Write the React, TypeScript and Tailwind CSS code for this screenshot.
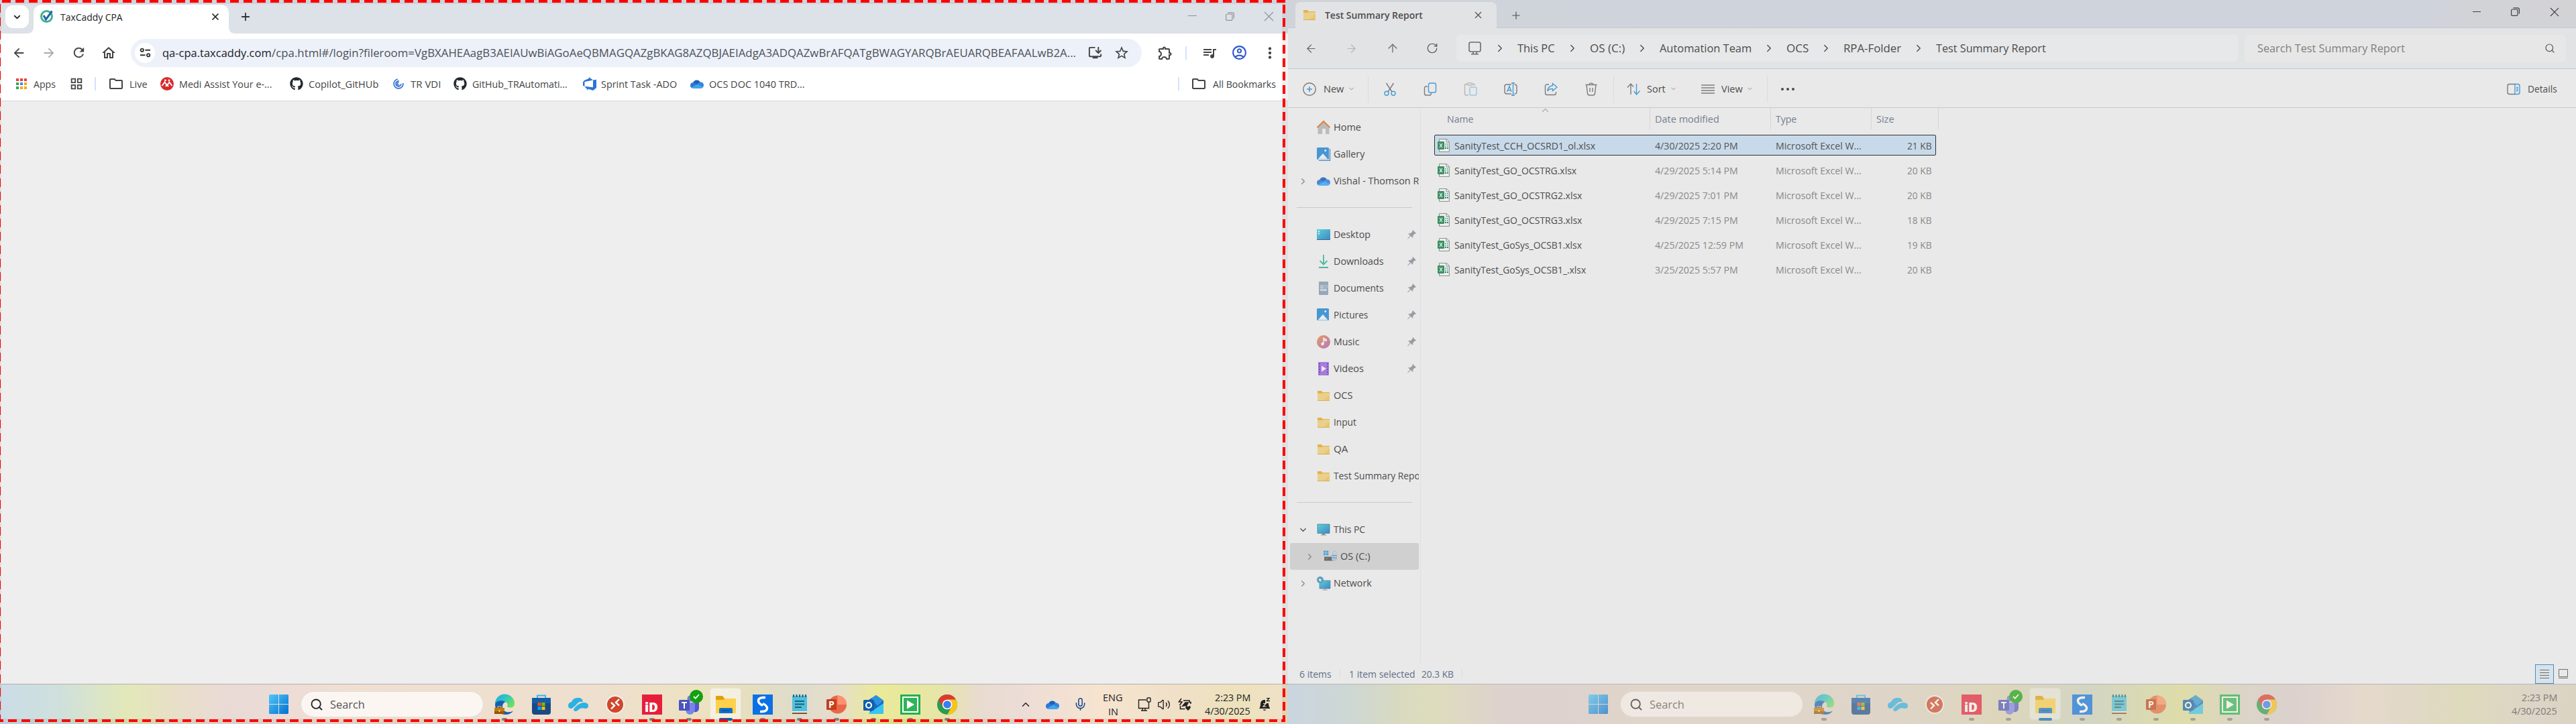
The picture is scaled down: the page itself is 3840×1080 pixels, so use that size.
import React, { useLayoutEffect, useRef, useState } from "react";
import {
  ArrowLeft, ArrowRight, ArrowUp, RotateCw, ChevronDown, ChevronRight, ChevronUp,
  X, Plus, Search, Mic, Volume2,
} from "lucide-react";
import {
  MdInstallDesktop, MdStarBorder, MdOutlineExtension, MdQueueMusic, MdMoreVert,
  MdOutlineAccountCircle, MdOutlineFolder, MdOutlineGridView, MdOutlineHome, MdRefresh,
  MdArrowBack, MdArrowForward,
} from "react-icons/md";
import { FaGithub } from "react-icons/fa";

/* Single line of text fitted to a given advance width. */
function T({ w, className = "", children }: { w: number; className?: string; children: string }) {
  const ref = useRef<HTMLSpanElement>(null);
  const [scale, setScale] = useState(1);
  useLayoutEffect(() => {
    if (ref.current) setScale(w / ref.current.offsetWidth);
  }, [w]);
  return (
    <span className={"block shrink-0 whitespace-nowrap " + className} style={{ width: w }}>
      <span ref={ref} className="inline-block origin-left" style={{ transform: `scaleX(${scale})` }}>
        {children}
      </span>
    </span>
  );
}

const sv = "block shrink-0 overflow-visible";

/* ---------- icons ---------- */
function Folder({ className = "" }: { className?: string }) {
  return (
    <svg viewBox="0 0 18 15" className={sv + " w-[18px] h-[15px] " + className}>
      <path d="M0 0.8Q0 0 .8 0H6l1.5 2H18v12.5H0z" fill="#e3b349" />
      <path d="M0 4h6.5L8 3h10v11H0z" fill="#ead08c" />
      <path d="M9 14L18 6v8z" fill="#e8c76f" />
      <path d="M0 14h18v.8H0z" fill="#d5a443" />
    </svg>
  );
}
function CloudIcon({ className = "" }: { className?: string }) {
  return (
    <svg viewBox="0 0 20 14" className={sv + " " + className}>
      <path d="M4 6A5.8 5.8 0 0 1 14.8 4.6L9 9z" fill="#1f5fb8" />
      <path d="M0 9.5A4.4 4.4 0 0 1 5 5l7 4-9 4.5Q0 12.5 0 9.5z" fill="#2b78d4" />
      <path d="M10 8l4.5-3.4A4.5 4.5 0 0 1 20 9.3Q20 11 19 12z" fill="#2f84dc" />
      <path d="M1.5 12.6L11 7.5l8.3 4.6Q18 14 15.5 14H4.5Q2.6 14 1.5 12.6z" fill="#41a5ee" />
    </svg>
  );
}
function TaxCaddy() {
  return (
    <svg viewBox="0 0 20 20" className={sv + " w-5 h-5"}>
      <circle cx="9.5" cy="10.5" r="8" fill="#fff" stroke="#3fb58c" strokeWidth="3" />
      <path d="M5 9l3.5 6L17.5 2.5" fill="none" stroke="#2c62a8" strokeWidth="3" />
    </svg>
  );
}
function AppsGrid() {
  const c = ["#ea4335", "#ea4335", "#ea4335", "#34a853", "#4285f4", "#f4a823", "#34a853", "#f4a823", "#f4a823"];
  return (
    <div className="grid grid-cols-3 gap-[2px] w-4 h-4 shrink-0">
      {c.map((x, i) => <i key={i} className="block" style={{ background: x }} />)}
    </div>
  );
}
function Medi() {
  return (
    <svg viewBox="0 0 20 20" className={sv + " w-5 h-5"}>
      <circle cx="10" cy="10" r="10" fill="#d62b2e" />
      <circle cx="7.5" cy="5" r="1.4" fill="#fff" /><circle cx="13" cy="5" r="1.4" fill="#fff" />
      <path d="M2.5 13L6.5 7.5l3.5 5 3.5-5 4 5.5M8 14l2-3 2 3" fill="none" stroke="#fff" strokeWidth="1.8" />
    </svg>
  );
}
function Swirl() {
  return (
    <svg viewBox="0 0 16 16" className={sv + " w-4 h-4"}>
      <path d="M7 1A7 7 0 1 0 15 7M9 4A4 4 0 1 0 12 8M8.5 6.5A1.7 1.7 0 1 0 9 9" fill="none" stroke="#3b74d1" strokeWidth="1.7" />
    </svg>
  );
}
function Ado() {
  return (
    <svg viewBox="0 0 24 24" className={sv + " w-5 h-5"} fill="#2b74d8">
      <path d="M0 8.877L2.247 5.91l8.405-3.416V.022l7.37 5.393L2.966 8.338v8.225L0 15.707zm24-4.45v14.651l-5.753 4.9-9.303-3.057v3.056l-5.978-7.416 15.057 1.798V5.415z" />
    </svg>
  );
}
function Tune() {
  return (
    <svg viewBox="0 0 18 16" className={sv + " w-[17px] h-[15px]"} fill="none" stroke="#333" strokeWidth="2">
      <circle cx="4" cy="4" r="2.3" /><path d="M9 4h8M1 12h8" /><circle cx="14" cy="12" r="2.3" />
    </svg>
  );
}
function Restore({ className = "" }: { className?: string }) {
  return (
    <svg viewBox="0 0 13 13" className={sv + " w-[13px] h-[13px] " + className} fill="none" stroke="currentColor" strokeWidth="1.2">
      <rect x=".6" y="3" width="9.4" height="9.4" rx="1.5" />
      <path d="M3.5 .8h6.5q2.4 0 2.4 2.4v6.3" />
    </svg>
  );
}
function WinLogo() {
  return (
    <svg viewBox="0 0 29 29" className={sv + " w-[29px] h-[29px]"}>
      <defs>
        <linearGradient id="win" x1="0" y1="0" x2="1" y2="1">
          <stop offset="0" stopColor="#4fc8fa" /><stop offset="1" stopColor="#0070d0" />
        </linearGradient>
      </defs>
      <path d="M1 0h13v14H0V1zM15 0h13l1 1v13H15zM0 15h14v14H1l-1-1zM15 15h14v13l-1 1H15z" fill="url(#win)" />
    </svg>
  );
}
function Monitor({ globe = false }: { globe?: boolean }) {
  return (
    <svg viewBox="0 0 20 20" className={sv + " w-5 h-5"}>
      <defs>
        <linearGradient id="mon" x1="0" y1="0" x2="1" y2="1">
          <stop offset="0" stopColor="#5fd0d6" /><stop offset="1" stopColor="#3f87c6" />
        </linearGradient>
      </defs>
      {globe ? (
        <>
          <path d="M4 6h16v12H4z" fill="url(#mon)" stroke="#3b7c9c" strokeWidth=".6" />
          <path d="M11 18h2v1.5H8.500v1h7v-1H13" fill="#999" />
          <circle cx="5" cy="5" r="5" fill="#5b9dbd" /><path d="M3 3l4 1-1 4-3-2z" fill="#d5e4ea" />
        </>
      ) : (
        <>
          <path d="M1 2h18v13.500H1z" fill="url(#mon)" stroke="#3a7f96" strokeWidth=".8" />
          <path d="M8 16h4v1.500h2v1H6v-1h2z" fill="#8b8f92" />
        </>
      )}
    </svg>
  );
}
function SideIcon({ name }: { name: string }) {
  const c = sv + " w-5 h-5";
  switch (name) {
    case "home":
      return (
        <svg viewBox="0 0 20 20" className={c}>
          <path d="M1.500 9L10 1.500 18.500 9v11H13v-8H8v8H1.500z" fill="#bcbcbc" />
          <path d="M.5 10.300L10 1l9.500 9.300" fill="none" stroke="#dc8442" strokeWidth="2" />
        </svg>
      );
    case "gallery":
    case "pictures":
      return (
        <svg viewBox="0 0 20 20" className={c}>
          {name === "gallery" && <path d="M19.500 2v17.500H3" fill="none" stroke="#3d82bb" strokeWidth="1.200" />}
          <rect x="0" y="0" width="18" height="18" rx="1.500" fill="#4797d2" />
          <path d="M1.500 17.500L9 9l7.500 8.500z" fill="#e6ebf0" /><circle cx="12.800" cy="4.500" r="1.500" fill="#e6f0f6" />
        </svg>
      );
    case "cloud":
      return <CloudIcon className="w-5 h-[14px] opacity-85" />;
    case "desktop":
      return (
        <svg viewBox="0 0 20 20" className={c}>
          <path d="M0 2h20v16H0z" fill="url(#mon)" /><path d="M0 17h20v1H0z" fill="#2f6d9a" />
          <path d="M2 4h2v2H2zM2 7.500h2v2H2z" fill="#d8f2f4" />
        </svg>
      );
    case "downloads":
      return (
        <svg viewBox="0 0 20 20" className={c} fill="none" stroke="#4cb8a2" strokeWidth="1.800">
          <path d="M10 0v14M4.500 9l5.500 5.500L15.500 9M3 19h14" />
        </svg>
      );
    case "documents":
      return (
        <svg viewBox="0 0 20 20" className={c}>
          <rect x="3" y="0" width="14" height="20" rx="1" fill="#96a7b9" />
          <path d="M5 6.500h5M12 6h3v2h-3zM5 9h5M5 11.500h10M5 13.500h10" stroke="#e8edf2" strokeWidth="1.100" />
        </svg>
      );
    case "music":
      return (
        <svg viewBox="0 0 20 20" className={c}>
          <defs>
            <linearGradient id="mus" x1="0" y1="0" x2="1" y2="1">
              <stop offset="0" stopColor="#e69a63" /><stop offset="1" stopColor="#b579bb" />
            </linearGradient>
          </defs>
          <circle cx="10" cy="10" r="10" fill="url(#mus)" />
          <circle cx="8.500" cy="13" r="2.200" fill="#f2eef0" /><path d="M10 13V4.500l4 2v2l-3-1" fill="none" stroke="#f2eef0" strokeWidth="1.500" />
        </svg>
      );
    case "videos":
      return (
        <svg viewBox="0 0 20 20" className={c}>
          <rect x="2" y="0" width="16" height="20" rx="1" fill="#a77bdd" />
          <path d="M7 5.500v9L14 10z" fill="#eee6f8" />
          <path d="M4 2v17M16 2v17" stroke="#5f4490" strokeWidth="1.500" strokeDasharray="2 2" />
        </svg>
      );
    case "pc":
      return <Monitor />;
    case "net":
      return <Monitor globe />;
    case "drive":
      return (
        <svg viewBox="0 0 20 20" className={c}>
          <path d="M0 1.500h3.300v3H0zM4 1.500h3.300v3H4zM0 5.200h3.300v3H0zM4 5.200h3.300v3H4z" fill="#4aa5d8" />
          <path d="M1 10.500h15v6H1z" fill="#6d6d6d" /><circle cx="4.500" cy="13.500" r=".8" fill="#6fdc6a" />
          <path d="M14 8V5q0-3 2.500-3T19 5" fill="none" stroke="#bcc3c8" strokeWidth="1.500" />
          <path d="M12 7h8v8q-4 4-8 0z" fill="#b4c4d0" /><path d="M12 8.500h8M12 12h8" stroke="#5b9fd0" />
        </svg>
      );
    default:
      return <Folder />;
  }
}
function Pin() {
  return (
    <svg viewBox="0 0 13 14" className={sv + " w-[13px] h-[14px]"} fill="#989da3">
      <path d="M8 0l5 5-1.500.8-1 .2-2 2.200L8 12 5 9 .5 13.500 0 13l4-4.500-3-3L4.800 5 7 3z" />
    </svg>
  );
}
function Excel() {
  return (
    <svg viewBox="0 0 18 20" className={sv + " w-[18px] h-5"}>
      <path d="M2.500 .6h11L17.400 4.500v14.900H2.500z" fill="#eff0f0" stroke="#8b8b8b" />
      <path d="M13 .6v4.500h4.400" fill="none" stroke="#8b8b8b" />
      <path d="M11 7h2v2h-2zM14 7h2v2h-2zM11 10h2v2h-2zM14 10h2v2h-2z" fill="#6cc5a0" />
      <path d="M11 13h2v2h-2zM14 13h2v2h-2z" fill="#3b7f5d" />
      <rect x="0" y="4" width="10" height="12" rx="1" fill="#3f8f67" />
      <path d="M3 7l4 6M7 7l-4 6" stroke="#e9f3ee" strokeWidth="1.200" />
    </svg>
  );
}

/* ---------- taskbar apps ---------- */
function AppIcon({ n }: { n: number }) {
  const c = sv + " w-[30px] h-[30px]";
  const b = { viewBox: "0 0 30 30", className: c };
  switch (n) {
    case 0:
      return (
        <svg {...b}>
          <defs>
            <linearGradient id="edge" x1="0" y1="0" x2="1" y2=".6">
              <stop offset="0" stopColor="#2aa5dc" /><stop offset=".5" stopColor="#2cc6c8" /><stop offset="1" stopColor="#6ce05b" />
            </linearGradient>
          </defs>
          <path d="M1 14A14.500 14 0 0 1 30 13q0 6.500-6 6.500-5 0-5-2 1.500-2 0-4.500Q15 9 9 9 3 9.500 1 14z" fill="url(#edge)" />
          <path d="M1 14q2-5 9-5 4 0 6.500 2Q12 13 12 18q0 6 6 8 5 1 10-1.500Q24 30 16 30 1 29 1 14z" fill="#1260b3" />
          <path d="M0 20h15v9H0z" fill="#c4790d" /><path d="M5 20v-2h5v2" fill="none" stroke="#d99a34" strokeWidth="1.500" />
          <path d="M0 25h15v4H0z" fill="#93560c" /><path d="M6.500 23h2v3h-2z" fill="#f5cf5a" />
        </svg>
      );
    case 1:
      return (
        <svg {...b}>
          <path d="M9 6V1.500h12V6" fill="none" stroke="#34b6ee" strokeWidth="2" />
          <path d="M1 5h28v21q0 4-4 4H5q-4 0-4-4z" fill="#194a86" /><path d="M1 5h28v8H1z" fill="#1465b4" opacity=".7" />
          <path d="M9.500 12h5v5h-5z" fill="#f25022" /><path d="M15.500 12h5v5h-5z" fill="#7fba00" />
          <path d="M9.500 18h5v5h-5z" fill="#00a4ef" /><path d="M15.500 18h5v5h-5z" fill="#ffb900" />
        </svg>
      );
    case 2:
      return (
        <svg {...b}>
          <path d="M0 17q0-5 5-6Q8 4 15 5q6-1 7 6-6-1-8 2-4 5-9 8-5 0-5-4zM8 22q6-9 15-10 7 0 7 5 0 4-5 4-5-2-9 1-2 3-6 3-2-1-2-3z" fill="#2cb1e4" />
        </svg>
      );
    case 3:
      return (
        <svg {...b}>
          <circle cx="15" cy="15" r="14" fill="#f5eeea" /><circle cx="15" cy="15" r="12" fill="#d0472c" />
          <path d="M9 12l5 4.500-5 5M21 7l-5 5 5 4.500" fill="none" stroke="#fff" strokeWidth="2.400" />
        </svg>
      );
    case 4:
      return (
        <svg {...b}>
          <path d="M0 0h30v30H0z" fill="#e61e3c" />
          <text x="14" y="26" textAnchor="middle" fontSize="19" fontWeight="800" fill="#fff">iD</text>
        </svg>
      );
    case 5:
      return (
        <svg {...b}>
          <circle cx="17" cy="6" r="4.500" fill="#7079de" /><circle cx="26" cy="9" r="3.500" fill="#5059c9" />
          <path d="M21 12h9v9q-1 6-7 5z" fill="#5059c9" /><path d="M10 12h14v10q-1 7-7.500 8Q10 29 10 22z" fill="#7b83eb" />
          <rect x="0" y="8" width="16" height="16" rx="1.500" fill="#4b53bc" />
          <path d="M4 12h8M8 12v9" stroke="#fff" strokeWidth="2" />
        </svg>
      );
    case 6:
      return (
        <svg {...b}>
          <path d="M0 3q0-1 1-1h9l3 4h17v22H0z" fill="#dfa10d" /><path d="M0 8h11l3-2h16v22H0z" fill="#ffd04b" />
          <path d="M5 22q0-2 2-2h16q2 0 2 2v6H5z" fill="#1170c9" /><path d="M9 24h12" stroke="#0a4b95" strokeWidth="1.500" />
        </svg>
      );
    case 7:
      return (
        <svg {...b}>
          <path d="M0 0h30v30H0z" fill="#0c71e4" />
          <path d="M19 4.500Q8 4 8.500 10q.3 3.500 6.500 6.500" fill="none" stroke="#fff" strokeWidth="3.400" />
          <path d="M11 25.500Q22 26 21.500 20q-.3-3.500-6.500-6.500" fill="none" stroke="#fff" strokeWidth="3.400" />
        </svg>
      );
    case 8:
      return (
        <svg {...b}>
          <rect x="4" y="2" width="22" height="25" rx="1" fill="#52bfdd" /><path d="M4 26h22v3H4z" fill="#8a4a22" /><path d="M4 25h22v2H4z" fill="#eee" />
          <path d="M6 0v4M10.500 0v4M15 0v4M19.500 0v4M24 0v4" stroke="#17667f" strokeWidth="2" />
          <path d="M8 10h14M8 14.500h14M8 19h10" stroke="#15647d" strokeWidth="1.800" />
        </svg>
      );
    case 9:
      return (
        <svg {...b}>
          <circle cx="16.500" cy="15" r="13.500" fill="#e8694a" /><path d="M16.500 1.500a13.500 13.500 0 0 1 13.500 13.500H16.500z" fill="#ff9070" />
          <rect x="0" y="7" width="15" height="16" rx="1.500" fill="#c43e1c" />
          <text x="7.500" y="20" textAnchor="middle" fontSize="14" fontWeight="700" fill="#fff">P</text>
        </svg>
      );
    case 10:
      return (
        <svg {...b}>
          <path d="M8 8L19 1l11 8v17q0 3-3 3H10z" fill="#1a68be" /><path d="M12 6l7-5 11 8-9 8z" fill="#2b94e0" />
          <path d="M8 28L30 13v13q0 3-3 3H9z" fill="#37c6f2" />
          <rect x="0" y="8" width="16" height="16" rx="1.500" fill="#0f5eb0" />
          <circle cx="8" cy="16" r="4" fill="none" stroke="#fff" strokeWidth="2.200" />
        </svg>
      );
    case 11:
      return (
        <svg {...b}>
          <path d="M0 0h30v30H0z" fill="#23b14e" /><path d="M4 4h22v22H4z" fill="#2fb459" stroke="#fff" strokeWidth="2" />
          <path d="M10 8.500v13L21 15z" fill="#fff" />
        </svg>
      );
    default:
      return (
        <svg {...b}>
          <circle cx="15" cy="15" r="15" fill="#2b9b4c" />
          <path d="M2 7.500A15 15 0 0 1 28 7.500L15 9 8.500 18.500z" fill="#e0392c" />
          <path d="M28 7.500A15 15 0 0 1 15 30l6.500-11.500L15 7.500z" fill="#f8c41c" />
          <circle cx="15" cy="15" r="7.300" fill="#fff" /><circle cx="15" cy="15" r="5.800" fill="#3c7df0" />
        </svg>
      );
  }
}

function Launcher() {
  const running = [0, 4, 5, 7, 8, 9, 10, 11, 12];
  return (
    <>
      <WinLogo />
      <div className="ml-[18px] w-[273px] h-[39px] shrink-0 rounded-full border border-black/10 bg-[#fcf8f5]/90 flex items-center pl-[13px] text-[#555]">
        <Search className="size-[20px] text-[#222]" strokeWidth={2.2} />
        <T w={52} className="ml-[10px] text-[17px]">Search</T>
      </div>
      <div className="ml-[3px] flex">
        {Array.from({ length: 13 }, (_, i) => (
          <div key={i} className="relative w-[55px] h-[59px] shrink-0 flex items-center justify-center">
            {i === 6 && <div className="absolute left-1 top-[5px] w-[47px] h-[48px] rounded-[5px] bg-white/50 border border-black/5" />}
            <div className="relative"><AppIcon n={i} /></div>
            {i === 5 && (
              <div className="absolute left-[29px] top-[8px] size-[20px] rounded-full bg-[#13a10e] flex items-center justify-center">
                <svg viewBox="0 0 10 8" className="w-[10px] h-2" fill="none" stroke="#fff" strokeWidth="1.800"><path d="M1 4l2.800 2.800L9 1" /></svg>
              </div>
            )}
            {running.includes(i) && <div className="absolute top-[50px] w-2 h-[4px] rounded-full bg-[#8b8680]" />}
            {i === 6 && <div className="absolute top-[50px] w-[20px] h-[4px] rounded-full bg-[#0067c0]" />}
          </div>
        ))}
      </div>
    </>
  );
}

/* ---------- Chrome ---------- */
function Bookmark({ w, children, label, gap, ml }: { w: number; children: React.ReactNode; label: string; gap: number; ml: number }) {
  return (
    <div className="flex items-center shrink-0" style={{ marginLeft: ml, gap }}>
      {children}
      <T w={w}>{label}</T>
    </div>
  );
}

function Chrome() {
  return (
    <div className="relative w-[1920px] h-[1080px] flex flex-col bg-[#eeeeee] shrink-0">
      <div className="h-[50px] bg-[#dde1e8] flex shrink-0 pt-[7px]">
        <div className="ml-2 mt-px w-[35px] h-[34px] rounded-[11px] bg-white flex items-center justify-center">
          <ChevronDown className="size-[15px] text-[#222]" strokeWidth={3} />
        </div>
        <div className="relative ml-[7px] w-[291px] h-[43px] rounded-t-[12px] bg-white flex items-start pl-[10px] pt-[7px]">
          <svg viewBox="0 0 10 10" className="absolute -left-[10px] bottom-0 size-[10px] fill-white"><path d="M10 0v10H0Q10 10 10 0" /></svg>
          <svg viewBox="0 0 10 10" className="absolute -right-[10px] bottom-0 size-[10px] fill-white"><path d="M0 0v10h10Q0 10 0 0" /></svg>
          <TaxCaddy />
          <T w={93} className="ml-[10px] text-[14.5px] leading-[23px] text-[#222]">TaxCaddy CPA</T>
          <X className="ml-[130px] mt-[3px] size-[16px] text-[#222]" strokeWidth={2.6} />
        </div>
        <Plus className="ml-[16px] mt-[9px] size-[18px] text-[#333]" strokeWidth={2.4} />
        <div className="ml-auto mr-[22px] mt-[11px] flex items-start text-[#8f9296]">
          <div className="mt-[5px] w-[13px] h-px bg-current" />
          <Restore className="ml-[43px]" />
          <svg viewBox="0 0 13 13" className={sv + " ml-[45px] w-[13px] h-[13px]"} stroke="currentColor" strokeWidth="1.1"><path d="M0 0l13 13M13 0L0 13" /></svg>
        </div>
      </div>
      <div className="h-[50px] bg-white flex items-center shrink-0 text-[#444] pt-[7px]">
        <MdArrowBack className="ml-[17px] size-[22px]" />
        <MdArrowForward className="ml-[23px] size-[22px] text-[#aaa]" />
        <MdRefresh className="ml-[22px] size-[23px]" />
        <MdOutlineHome className="ml-[21px] size-[24px]" />
        <div className="ml-[21px] w-[1507px] h-[42px] rounded-full bg-[#edf1fa] flex items-center pl-[6px]">
          <div className="size-[30px] rounded-full bg-white flex items-center justify-center"><Tune /></div>
          <T w={163} className="ml-[11px] text-[17px] text-[#202124]">qa-cpa.taxcaddy.com</T>
          <T w={1199} className="text-[17px] text-[#4d5156]">/cpa.html#/login?fileroom=VgBXAHEAagB3AEIAUwBiAGoAeQBMAGQAZgBKAG8AZQBJAEIAdgA3ADQAZwBrAFQATgBWAGYARQBrAEUARQBEAFAALwB2A...</T>
          <MdInstallDesktop className="ml-[17px] size-[23px]" />
          <MdStarBorder className="ml-[16px] size-[24px]" />
        </div>
        <MdOutlineExtension className="ml-[23px] size-[24px]" />
        <div className="ml-[18px] w-[2px] h-5 bg-[#d3e3fd]" />
        <MdQueueMusic className="ml-[22px] size-[24px]" />
        <MdOutlineAccountCircle className="ml-[20px] size-[25px] text-[#3059d0]" />
        <MdMoreVert className="ml-[20px] size-[26px]" />
      </div>
      <div className="h-[51px] bg-white border-b border-[#d9d9d9] flex items-center shrink-0 text-[15px] text-[#444] pr-[18px]">
        <Bookmark ml={24} gap={10} w={33} label="Apps"><AppsGrid /></Bookmark>
        <MdOutlineGridView className="ml-[20px] size-[22px]" />
        <div className="ml-[16px] w-[2px] h-5 bg-[#d3e3fd]" />
        <Bookmark ml={18} gap={8} w={27} label="Live"><MdOutlineFolder className="size-[24px]" /></Bookmark>
        <Bookmark ml={19} gap={8} w={138} label="Medi Assist Your e-..."><Medi /></Bookmark>
        <Bookmark ml={27} gap={8} w={104} label="Copilot_GitHUb"><FaGithub className="size-5 text-[#24292f]" /></Bookmark>
        <Bookmark ml={22} gap={10} w={45} label="TR VDI"><Swirl /></Bookmark>
        <Bookmark ml={19} gap={8} w={142} label="GitHub_TRAutomati..."><FaGithub className="size-5 text-[#24292f]" /></Bookmark>
        <Bookmark ml={23} gap={7} w={113} label="Sprint Task -ADO"><Ado /></Bookmark>
        <Bookmark ml={20} gap={8} w={143} label="OCS DOC 1040 TRD..."><CloudIcon className="w-5 h-[14px]" /></Bookmark>
        <div className="ml-auto w-[2px] h-5 bg-[#d3e3fd]" />
        <Bookmark ml={17} gap={9} w={94} label="All Bookmarks"><MdOutlineFolder className="size-[24px]" /></Bookmark>
      </div>
      <div className="flex-1" />
      <div className="h-[60px] border-t border-[#b5b1a8] shrink-0 flex items-center pl-[401px] bg-[linear-gradient(90deg,#cbdce8_0px,#cfe0dc_90px,#e3e8b8_190px,#e8dfc8_260px,#eadad6_340px,#ecdcd6_420px,#f0dfd0_520px,#eedfce_900px,#ece2c0_1050px,#e6dfbf_1105px,#dedccb_1190px,#e6ddcc_1245px,#eaea98_1310px,#e6e5a8_1400px,#e8dbcf_1460px,#ecdcd6_1520px,#f6e4d0_1640px,#f0e0c8_1750px,#ede2bc_1850px,#efe0c8_1920px)]">
        <Launcher />
        <div className="ml-auto mr-[27px] flex items-center text-[#222]">
          <ChevronUp className="size-[18px]" strokeWidth={2} />
          <CloudIcon className="ml-[21px] w-5 h-[14px]" />
          <Mic className="ml-[21px] size-[21px] text-[#1d4f91]" strokeWidth={1.8} />
          <div className="ml-[23px] text-[14.5px] leading-[21px]">
            <T w={30}>ENG</T>
            <T w={15} className="ml-[8px]">IN</T>
          </div>
          <svg viewBox="0 0 20 20" className={sv + " ml-[22px] w-5 h-5"} fill="none" stroke="currentColor" strokeWidth="1.4">
            <path d="M13 3H1.500v12.500h15V10M5 19h9M7 15.500v3M11 15.500v3" /><rect x="14" y="0" width="5" height="6" rx="1" /><path d="M16.500 6v4" />
          </svg>
          <Volume2 className="ml-[9px] size-[20px]" strokeWidth={1.6} />
          <svg viewBox="0 0 20 20" className={sv + " ml-[11px] w-5 h-5"} fill="none" stroke="currentColor" strokeWidth="1.600">
            <path d="M5 1L1.500 6H6L2.500 11" /><path d="M8 4h9v2.500h2V9M3.500 12v4.500h7" />
            <path d="M7 12l4-5h4l-2 4z" fill="currentColor" />
            <path d="M15 19q-5-4-3.500-6.500 2-1.500 3.500 1 1.500-2.500 3.500-1Q20 15 15 19z" fill="currentColor" stroke="none" />
          </svg>
          <div className="ml-[20px] text-[14.5px] leading-[20px]">
            <T w={53} className="ml-[15px]">2:23 PM</T>
            <T w={68}>4/30/2025</T>
          </div>
          <svg viewBox="0 0 16 20" className={sv + " ml-[13px] w-4 h-5"} fill="currentColor">
            <path d="M0 16q2-2 2-7 0-5 5-6h2v5h5q0 5 2 7v1zM5.500 17.500h5q-2.500 3-5 0z" /><path d="M11 .7h4l-3.500 4H16" fill="none" stroke="currentColor" strokeWidth="1.300" />
            <path d="M6 8.500h4L6 13h4.500" fill="none" stroke="#efe3cf" strokeWidth="1.200" />
          </svg>
        </div>
      </div>
      <Selection />
    </div>
  );
}

/* Dashed frame of the shared region, with the shade outside of it. */
function Selection() {
  return (
    <>
      <div className="absolute inset-0 border-t-[6px] border-r-[9px] border-b-[8px] border-l-[2px] border-black/6" />
      <div className="absolute left-0 top-0 w-[1916px] h-[4px] bg-[repeating-linear-gradient(90deg,transparent_0px,transparent_3px,#f00_3px,#f00_16px,transparent_16px,transparent_20px)]" />
      <div className="absolute left-0 top-[1073px] w-[1904px] h-[4px] bg-[repeating-linear-gradient(90deg,#f00_0px,#f00_5px,transparent_5px,transparent_12px,#f00_12px,#f00_20px)]" />
      <div className="absolute left-0 top-[6px] w-px h-[1071px] bg-[repeating-linear-gradient(180deg,#f00_0px,#f00_13px,transparent_13px,transparent_20px)]" />
      <div className="absolute left-[1912px] top-[7px] w-[4px] h-[1070px] bg-[repeating-linear-gradient(180deg,#f00_0px,#f00_13px,transparent_13px,transparent_20px)]" />
      <div className="absolute left-[1910px] top-[1073px] w-[6px] h-[4px] bg-[#f00]" />
    </>
  );
}

/* ---------- Explorer ---------- */
const crumbs: [string, number][] = [
  ["This PC", 56], ["OS (C:)", 52], ["Automation Team", 137], ["OCS", 33], ["RPA-Folder", 86], ["Test Summary Report", 164],
];
type Side = { i: string; t: string; w: number; pin?: boolean; ch?: "r" | "d"; sub?: boolean } | null;
const side: Side[] = [
  { i: "home", t: "Home", w: 41 }, { i: "gallery", t: "Gallery", w: 46 }, { i: "cloud", t: "Vishal - Thomson R", w: 127, ch: "r" }, null,
  { i: "desktop", t: "Desktop", w: 55, pin: true }, { i: "downloads", t: "Downloads", w: 75, pin: true },
  { i: "documents", t: "Documents", w: 75, pin: true }, { i: "pictures", t: "Pictures", w: 51, pin: true },
  { i: "music", t: "Music", w: 38, pin: true }, { i: "videos", t: "Videos", w: 45, pin: true },
  { i: "f", t: "OCS", w: 28 }, { i: "f", t: "Input", w: 34 }, { i: "f", t: "QA", w: 21 }, { i: "f", t: "Test Summary Report", w: 139 }, null,
  { i: "pc", t: "This PC", w: 47, ch: "d" }, { i: "drive", t: "OS (C:)", w: 45, ch: "r", sub: true }, { i: "net", t: "Network", w: 57, ch: "r" },
];
const files: [string, number, string, number, string][] = [
  ["SanityTest_CCH_OCSRD1_ol.xlsx", 210, "4/30/2025 2:20 PM", 124, "21 KB"],
  ["SanityTest_GO_OCSTRG.xlsx", 182, "4/29/2025 5:14 PM", 124, "20 KB"],
  ["SanityTest_GO_OCSTRG2.xlsx", 190, "4/29/2025 7:01 PM", 124, "20 KB"],
  ["SanityTest_GO_OCSTRG3.xlsx", 190, "4/29/2025 7:15 PM", 124, "18 KB"],
  ["SanityTest_GoSys_OCSB1.xlsx", 190, "4/25/2025 12:59 PM", 132, "19 KB"],
  ["SanityTest_GoSys_OCSB1_.xlsx", 196, "3/25/2025 5:57 PM", 124, "20 KB"],
];

function Cmd({ children, className = "ml-[40px]" }: { children: React.ReactNode; className?: string }) {
  return (
    <svg viewBox="0 0 20 20" className={sv + " w-5 h-5 " + className} fill="none" stroke="#7c7c7c" strokeWidth="1.400">{children}</svg>
  );
}
const B = "#4a9ad4";

function Explorer() {
  return (
    <div className="w-[1920px] h-[1080px] flex flex-col bg-[#e9e9e9] shrink-0 text-[#4c4c4c]">
      <div className="h-[42px] shrink-0 flex items-end border-b border-[#c4c9d1] bg-[linear-gradient(90deg,#d0d4d9_0%,#cfd3dc_40%,#cfd3dc_88%,#d2d3d7_92%,#d3d3d6_100%)]">
        <div className="ml-[11px] -mb-px w-[300px] h-[39px] rounded-t-[8px] bg-[#e2e3e5] flex items-center pl-[12px]">
          <Folder className="mb-px" />
          <T w={146} className="ml-[14px] text-[14.5px] font-semibold leading-[39px]">Test Summary Report</T>
          <X className="ml-[74px] size-[17px]" strokeWidth={1.5} />
        </div>
        <Plus className="ml-[20px] mb-[9px] size-[18px]" strokeWidth={1.5} />
        <div className="ml-auto mr-[26px] mb-[17px] flex items-center text-[#404040]">
          <div className="w-3 h-px bg-current" />
          <Restore className="ml-[45px]" />
          <svg viewBox="0 0 12 12" className={sv + " ml-[46px] w-3 h-3"} stroke="currentColor" strokeWidth="1.2"><path d="M0 0l12 12M12 0L0 12" /></svg>
        </div>
      </div>
      <div className="h-[61px] shrink-0 flex items-center border-b border-[#c4c8cf] bg-[#e2e3e5] text-[17px]">
        <ArrowLeft className="ml-[25px] size-[19px] text-[#666]" strokeWidth={1.5} />
        <ArrowRight className="ml-[41px] size-[19px] text-[#b5b5b5]" strokeWidth={1.5} />
        <ArrowUp className="ml-[42px] size-[20px] text-[#666]" strokeWidth={1.5} />
        <RotateCw className="ml-[40px] size-[18px] text-[#555]" strokeWidth={1.6} />
        <div className="ml-[27px] w-[1165px] h-[40px] rounded-[6px] bg-[#e7e8e9] flex items-center pl-[18px]">
          <svg viewBox="0 0 19 20" className={sv + " w-[19px] h-5"} fill="none" stroke="#6b6b6b" strokeWidth="1.6"><rect x="1" y="1" width="17" height="14" rx="2.500" /><path d="M7 15v3M12 15v3M4 18.800h11" /></svg>
          {crumbs.map(([t, w], k) => (
            <React.Fragment key={t}>
              <ChevronRight className={(k ? "ml-[17px]" : "ml-[19px]") + " size-[18px]"} strokeWidth={1.8} />
              <T w={w} className="ml-[17px]">{t}</T>
            </React.Fragment>
          ))}
        </div>
        <div className="ml-[10px] w-[479px] h-[41px] rounded-[6px] bg-[#e7e7e7] flex items-center pl-[19px] pr-[16px] text-[#808080]">
          <T w={220}>Search Test Summary Report</T>
          <Search className="ml-auto size-[16px] text-[#555]" strokeWidth={1.8} />
        </div>
      </div>
      <div className="h-[58px] shrink-0 flex items-center pt-[2px] border-b border-[#c6c9cf] text-[15px]">
        <Cmd className="ml-[22px]"><circle cx="10" cy="10" r="9.300" /><path d="M10 6v8M6 10h8" stroke={B} strokeWidth="1.600" /></Cmd>
        <T w={30} className="ml-[11px]">New</T>
        <ChevronDown className="ml-[6px] size-[11px] text-[#888]" />
        <div className="ml-[19px] w-px h-[40px] bg-[#dcdcdc]" />
        <Cmd className="ml-[22px]"><path d="M4.500 1l8.500 13M15.500 1L7 14" /><circle cx="5" cy="16.300" r="3" stroke={B} /><circle cx="15" cy="16.300" r="3" stroke={B} /></Cmd>
        <Cmd><path d="M6 6H3.500Q1.500 6 1.500 8.500v8q0 2.500 2.500 2.500h5q2.500 0 2.500-3" /><rect x="7.500" y="1" width="11" height="14" rx="2.500" stroke={B} /></Cmd>
        <Cmd><g opacity=".45"><path d="M5 2.500H3q-1.500 0-1.500 2V17q0 2 1.500 2h4M13 2.500h2q1.500 0 1.500 2" /><rect x="5" y="1" width="8" height="3" rx="1.500" /><rect x="9" y="7" width="10" height="12" rx="2" stroke={B} /></g></Cmd>
        <Cmd><path d="M11 3H4Q1 3 1 6v8q0 3 3 3h7M15.500 3q3.500 0 3.500 3v8q0 3-3.500 3" /><path d="M13.500 1v18M11 .8h5M11 19.200h5M4.500 14L8 5.500 11 14M6 11.500h4" stroke={B} /></Cmd>
        <Cmd><path d="M7 3H4Q1.500 3 1.500 5.500v10Q1.500 18.500 4 18.500h11q2.500 0 2.500-3V14" /><path d="M12.500 1.500L19 7l-6.500 5.500V9.500Q7 9 5 13q0-7 7.500-8.500z" stroke={B} /></Cmd>
        <Cmd><path d="M1.500 3.500h17M7 3Q7.500 1 10 1t3 2M3 3.500l1.500 13Q5 19 7 19h6q2 0 2.500-2.500L17 3.500M8 8v6M12 8v6" /></Cmd>
        <div className="ml-[23px] w-px h-[40px] bg-[#dcdcdc]" />
        <Cmd className="ml-[19px]"><path d="M6 18V2M1 7.500L6 2l4 4.500" /><path d="M14.500 2v16M10.500 13l4 5 5-5.500" stroke={B} /></Cmd>
        <T w={28} className="ml-[10px]">Sort</T>
        <ChevronDown className="ml-[6px] size-[11px] text-[#888]" />
        <Cmd className="ml-[36px]"><path d="M0 4h20M0 8h20M0 12h20M0 16h20" /></Cmd>
        <T w={32} className="ml-[10px]">View</T>
        <ChevronDown className="ml-[5px] size-[11px] text-[#888]" />
        <div className="ml-[20px] w-px h-[40px] bg-[#dcdcdc]" />
        <div className="ml-[20px] flex gap-[4px]">{[0, 1, 2].map((k) => <i key={k} className="block size-[4px] rounded-full bg-[#4a4a4a]" />)}</div>
        <div className="ml-auto mr-[28px] flex items-center">
          <Cmd className=""><path d="M12 2.500H4Q1 2.500 1 5v10q0 2.500 3 2.500h8" /><path d="M12 2.500h4q3 0 3 2.500v10q0 2.500-3 2.500h-4zM14 7.500h3M14 10h3M14 12.500h3" stroke={B} /></Cmd>
          <T w={44} className="ml-[11px]">Details</T>
        </div>
      </div>
      <div className="flex flex-1 min-h-0">
        <div className="w-[198px] shrink-0 border-r border-[#e0e0e0] pt-[9px] text-[14.5px] h-[829px]">
          {side.map((s, k) =>
            s === null ? (
              <div key={k} className="h-[40px] pt-[19px]"><div className="ml-[13px] w-[172px] h-px bg-[#cacaca]" /></div>
            ) : (
              <div key={k} className={"ml-[3px] w-[192px] h-[40px] flex items-center overflow-hidden rounded-[3px] " + (s.sub ? "bg-[#d0d0d0] pl-[22px]" : "pl-[12px]")}>
                <div className="w-[14px] shrink-0 text-[#8a8a8a]">
                  {s.ch === "r" && <ChevronRight className="size-[15px]" strokeWidth={2} />}
                  {s.ch === "d" && <ChevronDown className="size-[15px] text-[#444]" strokeWidth={2.200} />}
                </div>
                <div className="ml-[14px] w-[20px] shrink-0 flex justify-center"><SideIcon name={s.i} /></div>
                <T w={s.w} className="ml-[5px]">{s.t}</T>
                {s.pin && <div className="ml-auto mr-[4px]"><Pin /></div>}
              </div>
            )
          )}
        </div>
        <div className="pl-[20px] text-[14.5px]">
          <div className="relative h-[32px] w-[752px] grid grid-cols-[322px_180px_150px_100px] items-center text-[#74808f]">
            <svg viewBox="0 0 10 5" className="absolute left-[161px] top-px w-[9px] h-[5px]" fill="none" stroke="#777"><path d="M0 5l5-4.500L10 5" /></svg>
            <div className="h-full pl-[19px] pt-[6px] border-r border-[#d5d5d5]"><T w={40}>Name</T></div>
            <div className="h-full pl-[7px] pt-[6px] border-r border-[#d5d5d5]"><T w={96}>Date modified</T></div>
            <div className="h-full pl-[7px] pt-[6px] border-r border-[#d5d5d5]"><T w={31}>Type</T></div>
            <div className="h-full pl-[7px] pt-[6px] border-r border-[#d5d5d5]"><T w={27}>Size</T></div>
          </div>
          <div className="mt-[8px] flex flex-col gap-[6px]">
            {files.map(([n, nw, d, dw, s], k) => (
              <div
                key={n}
                className={
                  "w-[748px] h-[31px] grid grid-cols-[25px_299px_180px_1fr_37px] items-center pl-[4px] pr-[5px] border rounded-[2px] " +
                  (k ? "border-transparent text-[#898989]" : "border-[#333] bg-[#c8daea] text-[#555]")
                }
              >
                <Excel />
                <T w={nw} className="text-[#4e4e4e] pt-[2px]">{n}</T>
                <T w={dw} className="pt-[2px]">{d}</T>
                <T w={128} className="pt-[2px]">Microsoft Excel W...</T>
                <T w={37} className="pt-[2px]">{s}</T>
              </div>
            ))}
          </div>
        </div>
      </div>
      <div className="h-[30px] shrink-0 flex items-center pl-[17px] text-[14px] text-[#5f7088] pr-[12px]">
        <T w={48}>6 items</T>
        <div className="ml-[12px] w-px h-[14px] bg-[#dcdcdc]" />
        <T w={99} className="ml-[13px]">1 item selected</T>
        <T w={48} className="ml-[9px]">20.3 KB</T>
        <div className="ml-[12px] w-px h-[14px] bg-[#dcdcdc]" />
        <div className="ml-auto w-[28px] h-[29px] border border-[#4590c8] bg-[#dae2e9] flex items-center justify-center">
          <svg viewBox="0 0 14 13" className={sv + " w-[14px] h-[13px]"} stroke="#6d6d6d"><path d="M0 .5h14M0 4.500h14M0 8.500h14M0 12.500h14" /></svg>
        </div>
        <svg viewBox="0 0 14 14" className={sv + " ml-[7px] w-[14px] h-[14px]"} stroke="#6d6d6d" fill="none"><path d="M.5 .5h13v11H.5zM0 13.500h14" /></svg>
      </div>
      <div className="h-[60px] border-t border-[#b9b6b1] shrink-0 flex items-center bg-[linear-gradient(90deg,#cbd5e0_0px,#cdd7d4_90px,#d9dabf_170px,#dedcbd_220px,#ddd2ce_320px,#ddd2ce_420px,#e1d5c9_520px,#ded5c8_900px,#ddd6bc_1060px,#d3d5c4_1190px,#dedca9_1330px,#dbd5c6_1420px,#dcd1ce_1500px,#e5d9cc_1600px,#e1d8c6_1670px,#dedabc_1750px,#dcd5c8_1860px,#dbd4c2_1920px)]">
        <div className="flex items-center pl-[448px] opacity-65"><Launcher /></div>
        <div className="ml-auto mr-[28px] text-[14.5px] leading-[20px] text-[#7f7b74]">
          <T w={53} className="ml-[15px]">2:23 PM</T>
          <T w={68}>4/30/2025</T>
        </div>
      </div>
    </div>
  );
}

export default function App() {
  return (
    <div className="w-[3840px] h-[1080px] flex overflow-hidden font-['Open_Sans','Noto_Sans',sans-serif]">
      <Chrome />
      <Explorer />
    </div>
  );
}
